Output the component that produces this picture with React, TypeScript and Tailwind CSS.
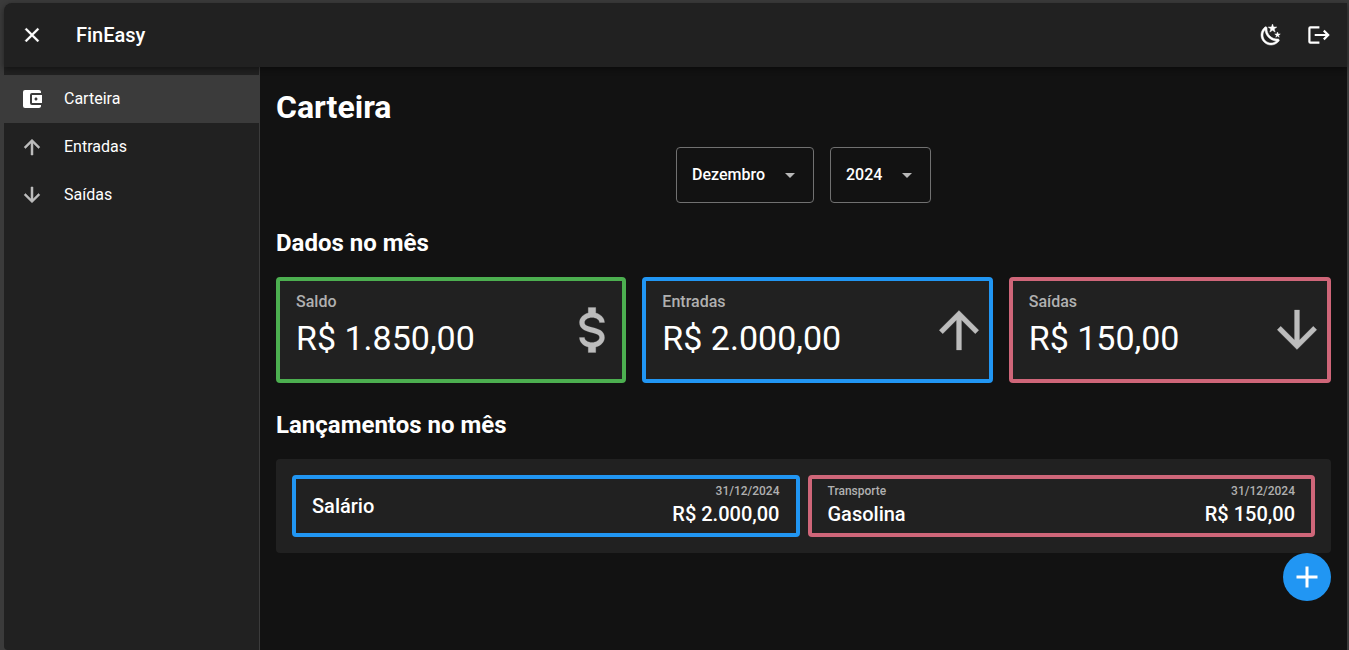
import { useState } from "react";
import type { ReactNode } from "react";
import { MdAccountBalanceWallet, MdAdd, MdArrowDropDown } from "react-icons/md";

const months = [
  "Janeiro", "Fevereiro", "Março", "Abril", "Maio", "Junho",
  "Julho", "Agosto", "Setembro", "Outubro", "Novembro", "Dezembro",
];

function Glyph({ d, weight = 0.3 }: { d: string; weight?: number }) {
  return (
    <svg viewBox="0 0 24 24" className="size-[1em]" fill="currentColor" stroke="currentColor" strokeWidth={weight} aria-hidden="true">
      <path d={d} />
    </svg>
  );
}

const close =
  "M19 6.41L17.59 5L12 10.59L6.41 5L5 6.41L10.59 12L5 17.59L6.41 19L12 13.41L17.59 19L19 17.59L13.41 12L19 6.41Z";
const arrowUp = "M13 20H11V8L5.5 13.5L4.08 12.08L12 4.16L19.92 12.08L18.5 13.5L13 8V20Z";
const arrowDown = "M11 4H13V16L18.5 10.5L19.92 11.92L12 19.84L4.08 11.92L5.5 10.5L11 16V4Z";
const dollar =
  "M7 15H9C9 16.08 10.37 17 12 17C13.63 17 15 16.08 15 15C15 13.9 13.96 13.5 11.76 12.97C9.64 12.44 7 11.78 7 9C7 7.21 8.47 5.69 10.5 5.18V3H13.5V5.18C15.53 5.69 17 7.21 17 9H15C15 7.92 13.63 7 12 7C10.37 7 9 7.92 9 9C9 10.1 10.04 10.5 12.24 11.03C14.36 11.56 17 12.22 17 15C17 16.79 15.53 18.31 13.5 18.82V21H10.5V18.82C8.47 18.31 7 16.79 7 15Z";
const moon =
  "M17.75 4.09L15.22 6.03L16.13 9.09L13.5 7.28L10.87 9.09L11.78 6.03L9.25 4.09L12.44 4L13.5 1L14.56 4L17.75 4.09M21.25 11L19.61 12.25L20.2 14.23L18.5 13.06L16.8 14.23L17.39 12.25L15.75 11L17.81 10.95L18.5 9L19.19 10.95L21.25 11M18.97 15.95C19.8 15.87 20.69 17.05 20.16 17.8C19.84 18.25 19.5 18.67 19.08 19.07C15.17 23 8.84 23 4.94 19.07C1.03 15.17 1.03 8.83 4.94 4.93C5.34 4.53 5.76 4.17 6.21 3.85C6.96 3.32 8.14 4.21 8.06 5.04C7.79 7.9 8.75 10.87 10.95 13.06C13.14 15.26 16.1 16.22 18.97 15.95M17.33 17.97C14.5 17.81 11.7 16.64 9.53 14.5C7.36 12.31 6.2 9.5 6.04 6.68C3.23 9.82 3.34 14.64 6.35 17.66C9.37 20.67 14.19 20.78 17.33 17.97Z";

function ExitIcon() {
  return (
    <svg viewBox="0 0 24 24" className="size-6" fill="none" stroke="currentColor" strokeWidth="2.2" aria-hidden="true">
      <path d="M12.4 4.3H3.3Q2.4 4.3 2.4 5.2V18.8Q2.4 19.7 3.3 19.7H12.4" />
      <path d="M7.7 12H21.2M16.8 7.6L21.2 12L16.8 16.4" />
    </svg>
  );
}

function NavItem({ icon, label, active }: { icon: ReactNode; label: string; active?: boolean }) {
  return (
    <li>
      <a
        href="#"
        aria-current={active ? "page" : undefined}
        className={
          active
            ? "flex h-12 items-center gap-5 bg-[#3b3b3b] px-4"
            : "flex h-12 items-center gap-5 px-4"
        }
      >
        <span className={active ? "text-2xl text-white" : "text-2xl text-[#bcbcbc]"}>{icon}</span>
        {label}
      </a>
    </li>
  );
}

function Picker({ label, options, initial, width }: { label: string; options: string[]; initial: string; width: string }) {
  const [value, setValue] = useState(initial);
  return (
    <div className={`relative ${width}`}>
      <select
        aria-label={label}
        value={value}
        onChange={(e) => setValue(e.target.value)}
        className="h-14 w-full appearance-none rounded border border-[#717171] bg-[#121212] pl-[15px] pr-8 text-base font-medium text-white"
      >
        {options.map((o) => (
          <option key={o}>{o}</option>
        ))}
      </select>
      <MdArrowDropDown className="pointer-events-none absolute right-3 top-4 size-6 text-[#b8b8b8]" />
    </div>
  );
}

function SummaryCard({ label, value, icon, border }: { label: string; value: string; icon: ReactNode; border: string }) {
  return (
    <article className={`flex flex-auto items-center justify-between rounded border-4 bg-[#212121] ${border}`}>
      <div className="px-4 pb-[18px] pt-2">
        <p className="text-base font-medium leading-[26px] text-[#b0b0b0]">{label}</p>
        <p className="whitespace-nowrap text-[34px] leading-[46px]">{value}</p>
      </div>
      <span className="text-[60px] text-[#bcbcbc]">{icon}</span>
    </article>
  );
}

function Entry({ category, title, date, value, border }: { category?: string; title: string; date: string; value: string; border: string }) {
  return (
    <li className={`flex flex-1 justify-between rounded border-4 px-4 font-medium ${border}`}>
      {category ? (
        <div className="pb-2">
          <p className="text-xs leading-6 text-[#b0b0b0]">{category}</p>
          <p className="text-xl leading-[22px]">{title}</p>
        </div>
      ) : (
        <p className="self-center text-xl leading-[22px]">{title}</p>
      )}
      <div className="pb-2 text-right">
        <p className="text-xs leading-6 text-[#b0b0b0]">{date}</p>
        <p className="text-xl leading-[22px]">{value}</p>
      </div>
    </li>
  );
}

export default function App() {
  return (
    <div className="flex min-h-screen flex-col bg-[#3b3b3b] pl-1 pr-0.5 pt-[3px] font-['Roboto',sans-serif] text-white">
      <header className="relative flex h-16 items-center justify-between rounded-tl-lg bg-[#212121] px-1 shadow-[0_2px_6px_rgba(0,0,0,0.45)]">
        <div className="flex items-center gap-5">
          <button type="button" aria-label="Fechar menu" className="flex size-12 items-center justify-center text-2xl">
            <Glyph d={close} />
          </button>
          <span className="text-xl font-medium">FinEasy</span>
        </div>
        <div className="flex">
          <button type="button" aria-label="Alternar tema" className="flex size-12 items-center justify-center text-2xl">
            <Glyph d={moon} weight={0.5} />
          </button>
          <button type="button" aria-label="Sair" className="flex size-12 items-center justify-center">
            <ExitIcon />
          </button>
        </div>
      </header>

      <div className="flex flex-1">
        <nav className="w-64 shrink-0 rounded-bl border-r border-[#3b3b3b] bg-[#212121] py-2">
          <ul>
            <NavItem active icon={<MdAccountBalanceWallet />} label="Carteira" />
            <NavItem icon={<Glyph d={arrowUp} weight={0.5} />} label="Entradas" />
            <NavItem icon={<Glyph d={arrowDown} weight={0.5} />} label="Saídas" />
          </ul>
        </nav>

        <main className="min-w-0 flex-1 bg-[#121212] p-4">
          <h1 className="mb-4 text-[32px] font-bold leading-[48px]">Carteira</h1>

          <div className="mb-[22px] flex justify-center gap-4">
            <Picker label="Mês" options={months} initial="Dezembro" width="w-[138px]" />
            <Picker label="Ano" options={["2023", "2024", "2025"]} initial="2024" width="w-[101px]" />
          </div>

          <h2 className="mb-4 text-2xl font-bold leading-9">Dados no mês</h2>
          <section className="mb-6 flex gap-4">
            <SummaryCard label="Saldo" value="R$ 1.850,00" icon={<Glyph d={dollar} weight={0.1} />} border="border-[#4caf50]" />
            <SummaryCard label="Entradas" value="R$ 2.000,00" icon={<Glyph d={arrowUp} weight={0.1} />} border="border-[#2196f3]" />
            <SummaryCard label="Saídas" value="R$ 150,00" icon={<Glyph d={arrowDown} weight={0.1} />} border="border-[#cf6679]" />
          </section>

          <h2 className="mb-4 text-2xl font-bold leading-9">Lançamentos no mês</h2>
          <ul className="flex gap-2 rounded bg-[#212121] p-4">
            <Entry title="Salário" date="31/12/2024" value="R$ 2.000,00" border="border-[#2196f3]" />
            <Entry category="Transporte" title="Gasolina" date="31/12/2024" value="R$ 150,00" border="border-[#cf6679]" />
          </ul>

          <div className="flex justify-end">
            <button
              type="button"
              aria-label="Adicionar lançamento"
              className="flex size-12 items-center justify-center rounded-full bg-[#2196f3]"
            >
              <MdAdd className="size-9" />
            </button>
          </div>
        </main>
      </div>
    </div>
  );
}
